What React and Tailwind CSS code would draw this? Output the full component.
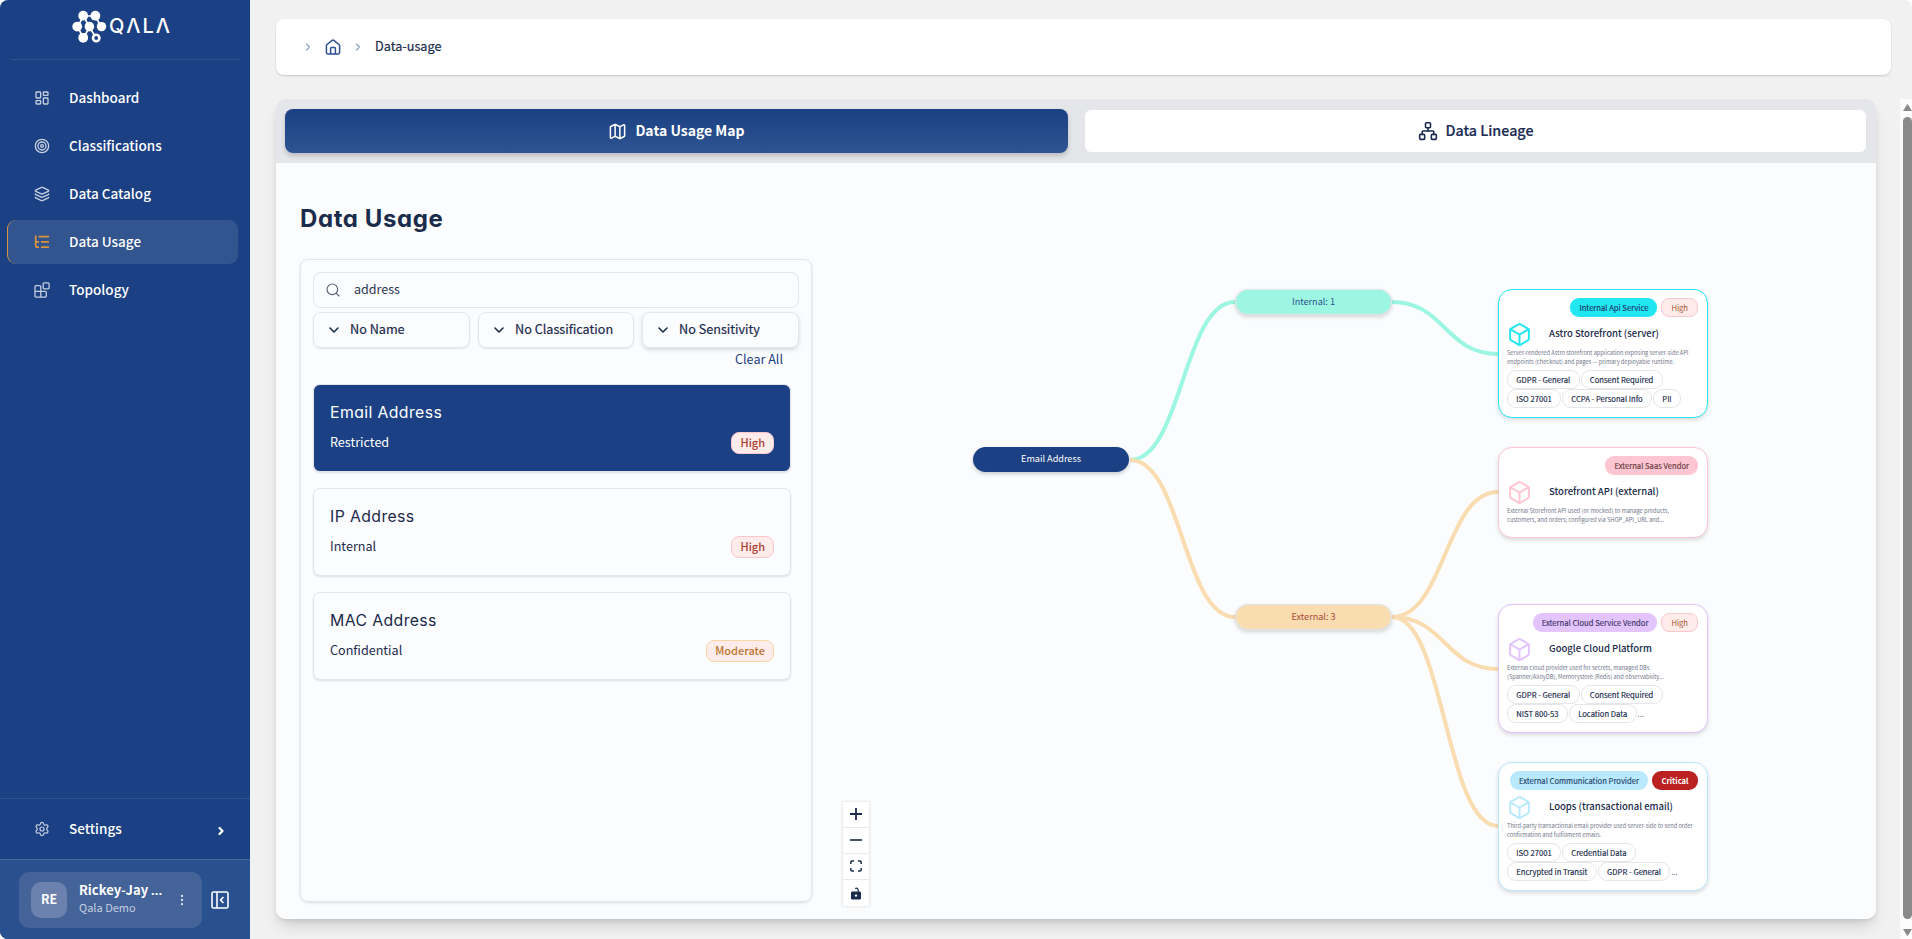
import React from "react";
import {
  LayoutDashboard,
  Target,
  Layers,
  Settings,
  EllipsisVertical,
  ChevronRight,
  ChevronDown,
  Map as MapIcon,
  Network,
  Search,
  Box,
} from "lucide-react";

function Logo() {
  return (
    <svg width="35" height="34" viewBox="0 0 35 34" fill="#fff" stroke="#fff" className="shrink-0">
      <path d="M11.5 6H23M5.5 17L11.5 28M11.5 6L5.5 17M11.5 6L17.5 17M23 6L29.5 17M17.5 17L11.5 28M17.5 17L24 28" fill="none" strokeWidth="1.6" />
      <g stroke="none">
        <circle cx="11.2" cy="5.7" r="4.9" />
        <circle cx="23.4" cy="5.7" r="4.9" />
        <circle cx="5.2" cy="16.6" r="4.9" />
        <circle cx="17.4" cy="16.6" r="4.8" />
        <circle cx="29.5" cy="16.6" r="4.7" />
        <circle cx="11.2" cy="27.8" r="4.9" />
      </g>
      <circle cx="24.2" cy="28" r="3.2" fill="#1b4083" strokeWidth="2.6" />
    </svg>
  );
}

function ListTreeIcon({ className }) {
  return (
    <svg viewBox="0 0 16 16" fill="none" stroke="currentColor" strokeWidth="1.7" className={className}>
      <path d="M1.7 1.5V11.5Q1.7 13.2 3.4 13.2H5M1.7 6.5Q1.7 7.9 3.4 7.9H5M4.5 2.6H15M7 7.9H15M7 13.2H15" />
    </svg>
  );
}

function BlocksIcon({ className }) {
  return (
    <svg viewBox="0 0 16 16" fill="none" stroke="currentColor" strokeWidth="1.3" className={className}>
      <rect x="9.2" y="0.9" width="5.9" height="5.9" rx="1" />
      <path d="M6.8 15.1V4.6Q6.8 3.6 5.8 3.6H2Q1 3.6 1 4.6V14.1Q1 15.1 2 15.1H11.3Q12.3 15.1 12.3 14.1V10.4Q12.3 9.4 11.3 9.4H1" />
    </svg>
  );
}

const NAV = [
  { label: "Dashboard", Icon: LayoutDashboard },
  { label: "Classifications", Icon: Target },
  { label: "Data Catalog", Icon: Layers },
  { label: "Data Usage", Icon: ListTreeIcon, active: true },
  { label: "Topology", Icon: BlocksIcon },
];

function Sidebar() {
  return (
    <aside className="flex w-[250px] shrink-0 flex-col overflow-hidden rounded-l-lg bg-[#1b4083] text-white">
      <div className="mx-[11px] flex h-[60px] shrink-0 items-start border-b border-[#315390] pt-[10px] pl-[61px]">
        <Logo />
        <span className="mt-[4px] ml-[2px] font-[Inter] text-[20px] leading-[24px] font-medium tracking-[2px]" aria-label="QALA">QΛLΛ</span>
      </div>
      <nav className="mt-4 flex flex-col gap-1 pr-3 pl-[7px]">
        {NAV.map(({ label, Icon, active }) => (
          <a
            key={label}
            className={
              active
                ? "flex h-11 items-center rounded-[9px] border-l border-[#d9933b] bg-[#32548f] pl-[26px]"
                : "flex h-11 items-center pl-[27px]"
            }
          >
            <Icon className={active ? "size-4 text-[#d9933b]" : "size-4 text-[#c6cfe0]"} />
            <span className="mb-[2px] ml-[19px] text-[13.5px] leading-5 font-medium">{label}</span>
          </a>
        ))}
      </nav>
      <div className="mt-auto flex h-[61px] shrink-0 items-center border-t border-[#315390] pr-[23px] pl-[34px]">
        <Settings className="size-4 text-[#c6cfe0]" strokeWidth={1.8} />
        <span className="mb-[2px] ml-[19px] text-[13.5px] leading-5 font-medium">Settings</span>
        <ChevronRight className="mt-1 ml-auto size-3" strokeWidth={4.5} />
      </div>
      <div className="flex h-20 shrink-0 items-center border-t border-[#4a6a9f] bg-[#2a518f] pl-[19px]">
        <div className="flex h-14 w-[183px] items-center rounded-[10px] bg-[#446398] pl-3">
          <div className="flex size-9 items-center justify-center rounded-[10px] bg-[#6c81ae] pb-px text-[12.5px] font-bold">RE</div>
          <div className="mb-[3px] ml-3 w-[84px]">
            <div className="text-[13px] leading-[18px] font-bold whitespace-nowrap">
              Rickey-Jay <span className="font-['Noto_Sans']">...</span>
            </div>
            <div className="text-[11px] leading-[16px] text-[#c6cfe0]">Qala Demo</div>
          </div>
          <EllipsisVertical className="ml-3 size-[14px] text-[#dbe1ec]" />
        </div>
        <svg viewBox="0 0 18 18" fill="none" stroke="#fff" strokeWidth="1.6" className="ml-[9px] size-[18px]">
          <rect x="1" y="1" width="16" height="16" rx="1.6" />
          <path d="M6 1V17M12.4 6L9.6 9L12.4 12" />
        </svg>
      </div>
    </aside>
  );
}

function Breadcrumb() {
  return (
    <div className="mt-[19px] mr-[21px] flex h-14 shrink-0 items-center rounded-lg bg-white pl-[26px] shadow-[0_1px_2px_rgba(0,0,0,0.18)]">
      <ChevronRight className="size-3 text-[#93a5c2]" strokeWidth={2.6} />
      <svg viewBox="0 0 16 16" fill="none" stroke="#2c5093" strokeWidth="1.5" strokeLinejoin="round" className="ml-[11px] size-4">
        <path d="M1.4 6.8Q1.4 6 2 5.5L7.2 1.3Q8 .7 8.8 1.3L14 5.5Q14.6 6 14.6 6.8V13.4Q14.6 15 13 15H3Q1.4 15 1.4 13.4ZM5.6 15V9.4Q5.6 8.5 6.5 8.5H9.5Q10.4 8.5 10.4 9.4V15" />
      </svg>
      <ChevronRight className="ml-[11px] size-3 text-[#93a5c2]" strokeWidth={2.6} />
      <span className="mb-[2px] ml-[11px] text-[12.7px] leading-5 text-[#1b2b4b] [-webkit-text-stroke:0.2px]">Data-usage</span>
    </div>
  );
}

function Tabs() {
  return (
    <div className="flex h-16 shrink-0 items-center rounded-t-[10px] bg-[#e4e6ea] pr-[10px] pl-[9px]">
      <div className="flex h-11 w-[783px] items-center justify-center rounded-lg bg-linear-to-b from-[#1b4083] to-[#2e5492] text-white shadow-[0_3px_5px_rgba(0,0,0,0.18)]">
        <MapIcon className="size-[19px]" strokeWidth={1.9} />
        <span className="mb-[2px] ml-[8px] text-[14px] leading-5 font-bold">Data Usage Map</span>
      </div>
      <div className="ml-[17px] flex h-[42px] flex-1 items-center justify-center rounded-md bg-white text-[#1b2b54]">
        <Network className="size-5" strokeWidth={1.9} />
        <span className="mb-[2px] ml-[8px] text-[14.3px] leading-5 font-medium [-webkit-text-stroke:0.2px]">Data Lineage</span>
      </div>
    </div>
  );
}

const SENSITIVITY = {
  High: "border-[#fcc6cf] bg-[#feecea] text-[#a8412f]",
  Moderate: "border-[#f8d8a6] bg-[#feecea] text-[#bb7431]",
};

function DataCard({ title, kind, level, active }) {
  return (
    <div
      className={
        active
          ? "flex h-[88px] w-[478px] flex-col rounded-[7px] border border-[#e4e6ea] bg-[#1b4083] px-4 text-white shadow-[0_1px_2px_rgba(0,0,0,0.12)]"
          : "flex h-[88px] w-[478px] flex-col rounded-[7px] border border-[#e4e6ea] bg-[#fbfcfe] px-4 text-[#1b2b4b] shadow-[0_1px_2px_rgba(0,0,0,0.12)]"
      }
    >
      <h3 className="mt-[16px] font-[Inter] text-[15.8px] leading-6 tracking-[0.4px] [font-feature-settings:'cv11']">{title}</h3>
      <div className="mt-[6px] flex justify-between">
        <span className="mt-px text-[12.6px] leading-5">{kind}</span>
        <span className={"mt-px flex h-[22px] items-center rounded-lg border px-2 pb-px text-[11px] font-medium " + SENSITIVITY[level]}>{level}</span>
      </div>
    </div>
  );
}

function Filter({ label, className }) {
  return (
    <div className={"flex h-9 items-center rounded-lg border border-[#e4e6ea] pl-[12px] text-[12.65px] text-[#1b2b4b] " + className}>
      <ChevronDown className="size-4" strokeWidth={2.4} />
      <span className="mb-[2px] ml-[8px] leading-5 [-webkit-text-stroke:0.2px]">{label}</span>
    </div>
  );
}

function Finder() {
  return (
    <section className="h-[643px] w-[512px] shrink-0 rounded-lg border border-[#e4e6ea] p-3 shadow-[0_1px_3px_rgba(0,0,0,0.12)]">
      <div className="flex h-9 w-[486px] items-center rounded-lg border border-[#e4e6ea] pl-[11px]">
        <Search className="size-4 text-[#5d5f74]" strokeWidth={1.7} />
        <span className="mb-[2px] ml-[13px] text-[12.5px] leading-5 text-[#2c3650]">address</span>
      </div>
      <div className="mt-1 flex w-[486px] gap-2">
        <Filter label="No Name" className="w-[157px] shadow-[0_1px_2px_rgba(0,0,0,0.1)]" />
        <Filter label="No Classification" className="w-[156px] shadow-[0_1px_2px_rgba(0,0,0,0.1)]" />
        <Filter label="No Sensitivity" className="w-[157px] shadow-[0_2px_4px_rgba(0,0,0,0.15)]" />
      </div>
      <div className="mr-4 flex justify-end text-[12.6px] leading-[22px] text-[#1b4083]">Clear All</div>
      <div className="mt-[14px] flex flex-col gap-4">
        <DataCard title="Email Address" kind="Restricted" level="High" active />
        <DataCard title="IP Address" kind="Internal" level="High" />
        <DataCard title="MAC Address" kind="Confidential" level="Moderate" />
      </div>
    </section>
  );
}

const ASSETS = [
  {
    place: "top-[30px] h-[129px] border-[#22e6f0]",
    tint: "bg-[#22e6f0] text-[#1b3a6b]",
    icon: "text-[#22e6f0]",
    type: "Internal Api Service",
    level: "High",
    name: "Astro Storefront (server)",
    text: ["Server-rendered Astro storefront application exposing server-side API", "endpoints (checkout) and pages — primary deployable runtime."],
    tags: [["GDPR - General", "Consent Required"], ["ISO 27001", "CCPA - Personal Info", "PII"]],
  },
  {
    place: "top-[188px] h-[91px] border-[#fdc6d2]",
    tint: "bg-[#fdc6d2] text-[#6b3b44]",
    icon: "text-[#fdc6d2]",
    type: "External Saas Vendor",
    name: "Storefront API (external)",
    text: ["External Storefront API used (or mocked) to manage products,", "customers, and orders; configured via SHOP_API_URL and..."],
    tags: [],
  },
  {
    place: "top-[345px] h-[129px] border-[#e3c4fd]",
    tint: "bg-[#e3c4fd] text-[#3f3566]",
    icon: "text-[#e3c4fd]",
    type: "External Cloud Service Vendor",
    level: "High",
    name: "Google Cloud Platform",
    text: ["External cloud provider used for secrets, managed DBs", "(Spanner/AlloyDB), Memorystore (Redis) and observability..."],
    tags: [["GDPR - General", "Consent Required"], ["NIST 800-53", "Location Data", "..."]],
  },
  {
    place: "top-[503px] h-[129px] border-[#b9e9fd]",
    tint: "bg-[#b9e9fd] text-[#26466f]",
    icon: "text-[#b9e9fd]",
    type: "External Communication Provider",
    level: "Critical",
    name: "Loops (transactional email)",
    text: ["Third-party transactional email provider used server-side to send order", "confirmation and fulfillment emails."],
    tags: [["ISO 27001", "Credential Data"], ["Encrypted in Transit", "GDPR - General", "..."]],
  },
];

function AssetNode({ place, tint, icon, type, level, name, text, tags }) {
  return (
    <div className={"absolute left-[686px] w-[210px] rounded-[14px] border-[1.5px] bg-white pt-2 pr-[9px] pl-2 shadow-[0_2px_4px_rgba(0,0,0,0.14)] " + place}>
      <div className="flex justify-end gap-1 text-[7.65px] leading-[19px]">
        <span className={"rounded-[9px] px-[9px] [-webkit-text-stroke:0.15px] " + tint}>{type}</span>
        {level === "High" && <span className="rounded-[8px] border border-[#fcc6cf] bg-[#feecea] px-[9px] leading-[17px] text-[#a8552f]">High</span>}
        {level === "Critical" && <span className="rounded-[9px] bg-[#bb2121] px-[9.5px] font-bold text-white">Critical</span>}
      </div>
      <div className="mt-[4px] flex h-[27px] items-center">
        <Box className={"mb-px size-[25px] " + icon} strokeWidth={1.9} />
        <span className="mb-[3px] ml-[17px] text-[9.5px] leading-[14px] font-medium whitespace-nowrap text-[#1b2b4b]">{name}</span>
      </div>
      <div className="mt-[1px] text-[5.65px] leading-[8.6px] whitespace-nowrap text-[#6f7688]">
        {text.map((line) => (
          <p key={line}>{line}</p>
        ))}
      </div>
      <div className="mt-[4px]">
        {tags.map((row) => (
          <div key={row[0]} className="flex h-[19px] gap-px">
            {row.map((tag) =>
              tag === "..." ? (
                <span key={tag} className="font-['Noto_Sans'] text-[8px] leading-[20px] text-[#4b5567]">...</span>
              ) : (
                <span key={tag} className="rounded-[9px] border border-[#e4e6ea] px-[8.3px] text-[7.65px] leading-[17px] whitespace-nowrap text-[#1b2b4b] [-webkit-text-stroke:0.15px]">{tag}</span>
              )
            )}
          </div>
        ))}
      </div>
    </div>
  );
}

function Canvas() {
  return (
    <section className="relative h-[660px] flex-1">
      <svg width="900" height="660" fill="none" strokeWidth="4" className="absolute top-0 left-0">
        <g stroke="#9cf6e1">
          <path d="M318 201C370 201 371 43 423 43" />
          <path d="M580 43C633 43 633 95 686 95" />
        </g>
        <g stroke="#f9dcb0">
          <path d="M318 201C370 201 371 358 423 358" />
          <path d="M580 358C633 358 633 233 686 233" />
          <path d="M580 358C633 358 633 410 686 410" />
          <path d="M580 358C633 358 633 567 686 567" />
        </g>
      </svg>
      <div className="absolute top-[188px] left-[161px] flex h-[25px] w-[156px] items-center justify-center rounded-full bg-[#1b4083] pb-px text-[9.1px] text-white shadow-[0_2px_4px_rgba(0,0,0,0.2)]">Email Address</div>
      <div className="absolute top-[30px] left-[423px] flex h-[26px] w-[157px] items-center justify-center rounded-full border border-[#dfe5ea] bg-[#9cf6e1] text-[9.1px] text-[#2a5390] shadow-[0_2px_4px_rgba(0,0,0,0.16)]">Internal: 1</div>
      <div className="absolute top-[345px] left-[423px] flex h-[26px] w-[157px] items-center justify-center rounded-full border border-[#dfe5ea] bg-[#f9dcb0] text-[9.1px] text-[#ab4a3a] shadow-[0_2px_4px_rgba(0,0,0,0.16)]">External: 3</div>
      {ASSETS.map((asset) => (
        <AssetNode key={asset.name} {...asset} />
      ))}
      <div className="absolute top-[543px] left-[31px] flex w-[26px] flex-col divide-y divide-[#e8eaee] bg-white text-[#1b2b4b] shadow-[0_0_2px_1px_rgba(0,0,0,0.08)]">
        <div className="flex h-[26px] items-center justify-center pb-px">
          <svg width="12" height="12" stroke="currentColor" strokeWidth="1.8"><path d="M0 6H12M6 0V12" /></svg>
        </div>
        <div className="flex h-[26px] items-center justify-center pb-px">
          <svg width="12" height="12" stroke="currentColor" strokeWidth="1.6"><path d="M0 6H12" /></svg>
        </div>
        <div className="flex h-[26px] items-center justify-center pb-[2px]">
          <svg width="12" height="12" fill="none" stroke="currentColor" strokeWidth="1.5"><path d="M.8 4V2.3Q.8 1 2.1 1H4M8 1H9.9Q11.2 1 11.2 2.3V4M11.2 8V9.7Q11.2 11 9.9 11H8M4 11H2.1Q.8 11 .8 9.7V8" /></svg>
        </div>
        <div className="flex h-[26px] items-center justify-center">
          <svg width="10" height="13" fill="currentColor"><path fillRule="evenodd" d="M1.3 4.6H8.7Q10 4.6 10 5.9V11.3Q10 12.6 8.7 12.6H1.3Q0 12.6 0 11.3V5.9Q0 4.6 1.3 4.6ZM5 7.4A1.2 1.2 0 1 0 5 9.8A1.2 1.2 0 1 0 5 7.4Z" /><path d="M4.2 1.6Q7.4 0 7.4 4.8" fill="none" stroke="currentColor" strokeWidth="1.3" /></svg>
        </div>
      </div>
    </section>
  );
}

function Scrollbar() {
  return (
    <div className="ml-auto flex w-3 shrink-0 flex-col bg-[#fcfcfc] pl-[3px]">
      <svg width="9" height="18" fill="#8a8a8a"><path d="M0 12L4 5.6Q4.5 5 5 5.6L9 12Z" /></svg>
      <div className="h-[802px] w-[9px] rounded-full bg-[#8a8a8a]" />
      <svg width="9" height="20" fill="#8a8a8a"><path d="M0 10L4 16.4Q4.5 17 5 16.4L9 10Z" /></svg>
    </div>
  );
}

export default function App() {
  return (
    <div className="flex h-[939px] w-[1912px] overflow-hidden bg-white font-['Noto_Sans_CJK_SC',sans-serif]">
      <Sidebar />
      <main className="flex min-w-0 flex-1 flex-col rounded-r-lg bg-[#f1f1f1] pl-[26px]">
        <Breadcrumb />
        <div className="mt-6 flex min-h-0 flex-1">
          <div className="flex h-[820px] w-[1600px] flex-col rounded-[10px] shadow-[0_10px_15px_-3px_rgba(0,0,0,0.12),0_4px_6px_-2px_rgba(0,0,0,0.1)]">
            <Tabs />
            <div className="flex-1 overflow-hidden rounded-b-[10px] bg-[#fbfcfe] pl-6">
              <h1 className="mt-[38px] font-[Inter] text-[24px] leading-9 font-bold tracking-[0.6px] text-[#1b2b4b] [font-feature-settings:'cv11']">Data Usage</h1>
              <div className="mt-[22px] flex">
                <Finder />
                <Canvas />
              </div>
            </div>
          </div>
          <Scrollbar />
        </div>
      </main>
    </div>
  );
}
